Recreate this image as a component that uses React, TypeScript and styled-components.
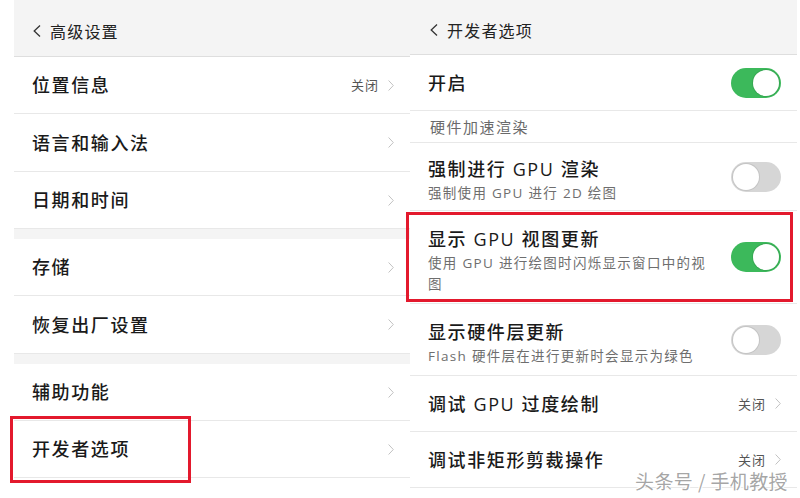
import React from "react";
import styled, { createGlobalStyle } from "styled-components";

const GlobalStyle = createGlobalStyle`
  html, body {
    margin: 0;
    padding: 0;
    background: #ffffff;
  }
  * {
    box-sizing: border-box;
  }
`;

const font = `"Open Sans", "Noto Sans CJK SC", sans-serif`;

const Page = styled.div`
  position: relative;
  width: 800px;
  height: 498px;
  overflow: hidden;
  background: #ffffff;
  display: flex;
  padding-left: 14px;
  font-family: ${font};
  color: #1c1c1c;
`;

const Panel = styled.div<{ $width: number }>`
  width: ${(p) => p.$width}px;
  display: flex;
  flex-direction: column;
  background: #ffffff;
`;

const Header = styled.div<{ $height: number; $indent: number; $drop: number }>`
  height: ${(p) => p.$height}px;
  flex-shrink: 0;
  background: #f4f4f4;
  border-bottom: 1px solid #dedede;
  display: flex;
  align-items: center;
  gap: 9px;
  padding-left: ${(p) => p.$indent}px;
  padding-top: ${(p) => p.$drop}px;
  font-size: 16px;
  letter-spacing: 1.2px;
  color: #222;
`;

const Row = styled.div<{ $height: number }>`
  position: relative;
  height: ${(p) => p.$height}px;
  flex-shrink: 0;
  display: flex;
  align-items: center;
  justify-content: space-between;
  padding: 0 16px 0 18px;
  border-bottom: 1px solid #e8e8e8;
`;

const Gap = styled.div`
  height: 10px;
  flex-shrink: 0;
  background: #f4f4f4;
`;

const Section = styled.div`
  height: 32px;
  flex-shrink: 0;
  display: flex;
  align-items: center;
  padding-left: 20px;
  font-size: 15px;
  letter-spacing: 1.5px;
  color: #6a6a6a;
  border-bottom: 1px solid #e8e8e8;
`;

const TextBlock = styled.div<{ $drop: number }>`
  display: flex;
  flex-direction: column;
  gap: 2px;
  margin-top: ${(p) => p.$drop}px;
`;

const Title = styled.div`
  font-size: 18px;
  font-weight: 500;
  letter-spacing: 1.6px;
  line-height: 24px;
  white-space: pre;
  color: #1a1a1a;
`;

const Sub = styled.div`
  font-size: 13.5px;
  letter-spacing: 1.3px;
  line-height: 21px;
  white-space: pre;
  color: #6e6e6e;
`;

const Trail = styled.div`
  display: flex;
  align-items: center;
  gap: 9px;
  font-size: 13px;
  line-height: 16px;
  letter-spacing: 1px;
  color: #555;
`;

const Toggle = styled.div<{ $on: boolean }>`
  position: relative;
  width: 50px;
  height: 30px;
  border-radius: 15px;
  flex-shrink: 0;
  background: ${(p) => (p.$on ? "#3cb95b" : "#d6d6d6")};

  &::after {
    content: "";
    position: absolute;
    top: 2px;
    left: ${(p) => (p.$on ? "22px" : "2px")};
    width: 26px;
    height: 26px;
    border-radius: 50%;
    background: #ffffff;
    box-shadow: 0 0 0 1px ${(p) => (p.$on ? "#36a852" : "#c4c4c4")};
  }
`;

const Highlight = styled.div<{ $top: number; $left: number; $right: number; $bottom: number }>`
  position: absolute;
  top: ${(p) => p.$top}px;
  left: ${(p) => p.$left}px;
  right: ${(p) => p.$right}px;
  bottom: ${(p) => p.$bottom}px;
  border: 3px solid #e3192d;
  pointer-events: none;
`;

const Watermark = styled.div`
  position: absolute;
  right: 12px;
  bottom: 8px;
  font-family: "Noto Sans CJK SC", sans-serif;
  font-size: 19px;
  line-height: 18px;
  letter-spacing: 0.4px;
  color: rgba(150, 150, 150, 0.85);
  text-shadow: 0 0 1px #fff, 1px 1px 0 #fff, -1px -1px 0 #fff;
`;

const Back = () => (
  <svg width="8" height="12" viewBox="0 0 8 12">
    <polyline points="7,0.5 1.2,6 7,11.5" fill="none" stroke="#333" strokeWidth="1.3" />
  </svg>
);

const Chevron = () => (
  <svg width="6" height="11" viewBox="0 0 6 11">
    <polyline points="0.6,0.5 5.3,5.5 0.6,10.5" fill="none" stroke="#c2c2c2" strokeWidth="1" />
  </svg>
);

const NavRow = ({ title, value, height = 57, children }: { title: string; value?: string; height?: number; children?: React.ReactNode }) => (
  <Row $height={height}>
    <Title>{title}</Title>
    <Trail>
      {value}
      <Chevron />
    </Trail>
    {children}
  </Row>
);

const SwitchRow = ({ title, sub, on, height, children }: { title: string; sub?: React.ReactNode; on: boolean; height: number; children?: React.ReactNode }) => (
  <Row $height={height}>
    <TextBlock $drop={sub ? 8 : 0}>
      <Title>{title}</Title>
      {sub && <Sub>{sub}</Sub>}
    </TextBlock>
    <Toggle $on={on} />
    {children}
  </Row>
);

const App = () => (
  <>
    <GlobalStyle />
    <Page>
      <Panel $width={396}>
        <Header $height={57} $indent={19} $drop={6}>
          <Back />
          高级设置
        </Header>
        <NavRow title="位置信息" value="关闭" />
        <NavRow title="语言和输入法" height={58} />
        <NavRow title="日期和时间" />
        <Gap />
        <NavRow title="存储" />
        <NavRow title="恢复出厂设置" height={58} />
        <Gap />
        <NavRow title="辅助功能" />
        <NavRow title="开发者选项">
          <Highlight $top={-5} $left={-4} $right={219} $bottom={-6} />
        </NavRow>
      </Panel>
      <Panel $width={387}>
        <Header $height={55} $indent={20} $drop={5}>
          <Back />
          开发者选项
        </Header>
        <SwitchRow title="开启" on height={56} />
        <Section>硬件加速渲染</Section>
        <SwitchRow title="强制进行 GPU 渲染" sub="强制使用 GPU 进行 2D 绘图" on={false} height={68} />
        <SwitchRow
          title="显示 GPU 视图更新"
          sub={
            <>
              使用 GPU 进行绘图时闪烁显示窗口中的视
              <br />图
            </>
          }
          on
          height={93}
        >
          <Highlight $top={1} $left={-4} $right={4} $bottom={1} />
        </SwitchRow>
        <SwitchRow title="显示硬件层更新" sub="Flash 硬件层在进行更新时会显示为绿色" on={false} height={72} />
        <NavRow title="调试 GPU 过度绘制" height={56} value="关闭" />
        <NavRow title="调试非矩形剪裁操作" height={56} value="关闭" />
      </Panel>
      <Watermark>头条号 / 手机教授</Watermark>
    </Page>
  </>
);

export default App;
